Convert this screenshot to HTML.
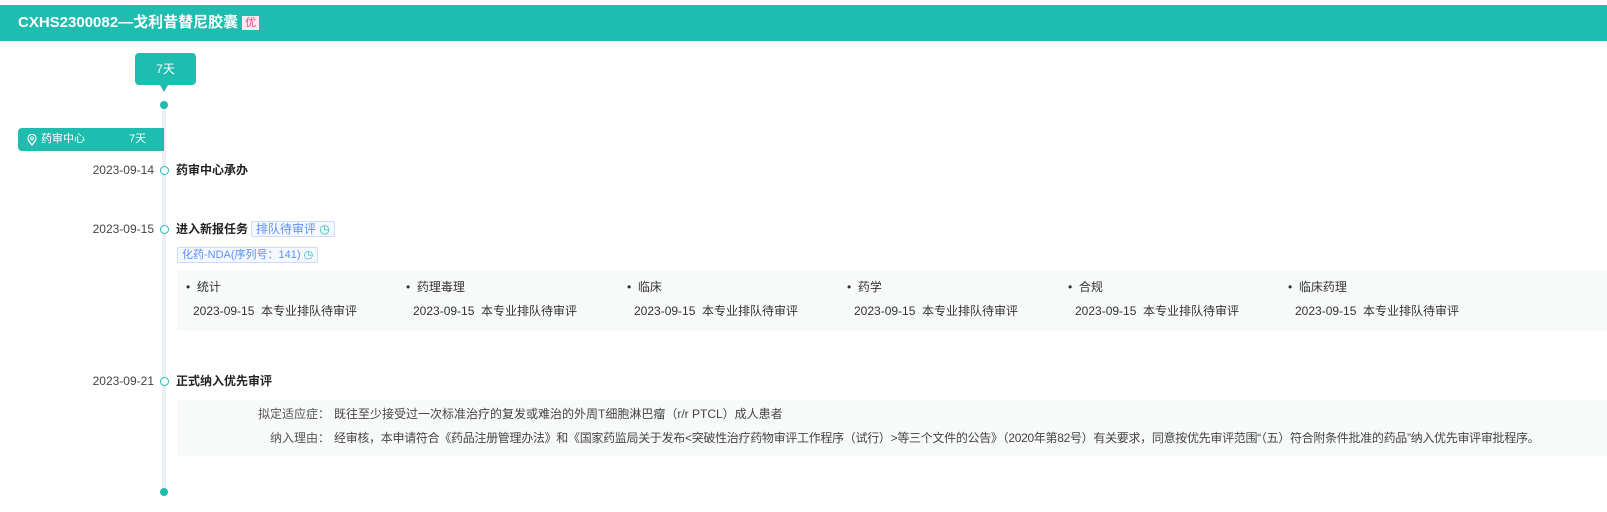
<!DOCTYPE html>
<html><head><meta charset="utf-8"><style>
*{margin:0;padding:0;box-sizing:border-box}
body{width:1607px;height:512px;background:#fff;font-family:"Liberation Sans","Noto Sans CJK SC",sans-serif;font-size:12px;color:#333;position:relative;overflow:hidden}
.abs{position:absolute;white-space:nowrap}
.hdr{left:0;top:5px;width:1607px;height:36px;background:#1fbcb0}
.hdr .t{position:absolute;left:18px;top:9px;color:#fff;font-weight:bold;font-size:15px;line-height:18px}
.you{display:inline-block;background:#fde8ef;color:#e8457a;font-size:11px;font-weight:normal;line-height:14px;padding:0 3px;margin-left:4px;vertical-align:1px}
.line{left:162px;top:105px;width:4px;height:387px;background:#e9eef5}
.dot{width:8px;height:8px;border-radius:50%;background:#1fbcb0}
.ring{width:9px;height:9px;border-radius:50%;border:1.5px solid #1fbcb0;background:#fff}
.bub{left:135px;top:53px;width:61px;height:32px;background:#1fbcb0;border-radius:4px;color:#fff;text-align:center;line-height:32px;font-size:12px}
.arr{left:160px;top:85px;width:0;height:0;border-left:4px solid transparent;border-right:4px solid transparent;border-top:7px solid #1fbcb0}
.gtag{left:18px;top:128px;width:146px;height:23px;background:#1fbcb0;border-radius:4px 0 0 4px;color:#fff;font-size:11px;line-height:23px}
.date{width:80px;text-align:right;color:#444;line-height:16px}
.ttl{font-weight:bold;color:#222;line-height:16px}
.tag{border:1px solid #c8dcfb;color:#5b8ff9;background:#f5f9ff;height:16px;line-height:14px;padding:0 4px;font-size:12px;border-radius:2px}
.box{background:#f8fafa}
.col{line-height:16px}
</style></head><body>
<div class="abs hdr"><div class="t">CXHS2300082—戈利昔替尼胶囊<span class="you">优</span></div></div>
<div class="abs bub">7天</div>
<div class="abs arr"></div>
<div class="abs line"></div>
<div class="abs dot" style="left:160px;top:101px"></div>
<div class="abs dot" style="left:160px;top:488px"></div>
<div class="abs gtag"><svg style="position:absolute;left:9px;top:6px" width="10" height="12" viewBox="0 0 10 12"><path d="M5 11C2.5 8 1 6.2 1 4.3A4 4 0 0 1 9 4.3C9 6.2 7.5 8 5 11Z" fill="none" stroke="#fff" stroke-width="1.2"/><circle cx="5" cy="4.4" r="1.4" fill="none" stroke="#fff" stroke-width="1.1"/></svg><span style="position:absolute;left:23px">药审中心</span><span style="position:absolute;left:111px">7天</span></div>

<div class="abs date" style="left:74px;top:162px">2023-09-14</div>
<div class="abs ring" style="left:159.5px;top:165.5px"></div>
<div class="abs ttl" style="left:176px;top:162px">药审中心承办</div>

<div class="abs date" style="left:74px;top:221px">2023-09-15</div>
<div class="abs ring" style="left:159.5px;top:224.5px"></div>
<div class="abs ttl" style="left:176px;top:221px">进入新报任务</div>
<div class="abs tag" style="left:251px;top:221px">排队待审评 <span style="color:#1fbcb0">◷</span></div>
<div class="abs tag" style="left:177px;top:247px;font-size:11px">化药-NDA(序列号：141) <span style="color:#1fbcb0">◷</span></div>
<div class="abs box" style="left:177px;top:271px;width:1430px;height:60px"></div>
<div class="abs col" style="left:186px;top:279px">•&nbsp; 统计<br><span style="display:block;margin-top:8px;margin-left:7px">2023-09-15&nbsp; 本专业排队待审评</span></div>
<div class="abs col" style="left:406px;top:279px">•&nbsp; 药理毒理<br><span style="display:block;margin-top:8px;margin-left:7px">2023-09-15&nbsp; 本专业排队待审评</span></div>
<div class="abs col" style="left:627px;top:279px">•&nbsp; 临床<br><span style="display:block;margin-top:8px;margin-left:7px">2023-09-15&nbsp; 本专业排队待审评</span></div>
<div class="abs col" style="left:847px;top:279px">•&nbsp; 药学<br><span style="display:block;margin-top:8px;margin-left:7px">2023-09-15&nbsp; 本专业排队待审评</span></div>
<div class="abs col" style="left:1068px;top:279px">•&nbsp; 合规<br><span style="display:block;margin-top:8px;margin-left:7px">2023-09-15&nbsp; 本专业排队待审评</span></div>
<div class="abs col" style="left:1288px;top:279px">•&nbsp; 临床药理<br><span style="display:block;margin-top:8px;margin-left:7px">2023-09-15&nbsp; 本专业排队待审评</span></div>

<div class="abs date" style="left:74px;top:373px">2023-09-21</div>
<div class="abs ring" style="left:159.5px;top:376.5px"></div>
<div class="abs ttl" style="left:176px;top:373px">正式纳入优先审评</div>
<div class="abs box" style="left:177px;top:400px;width:1430px;height:56px"></div>
<div class="abs" style="left:200px;top:406px;width:130px;text-align:right;color:#555;line-height:16px">拟定适应症：</div>
<div class="abs" style="left:334px;top:406px;color:#444;line-height:16px">既往至少接受过一次标准治疗的复发或难治的外周T细胞淋巴瘤（r/r PTCL）成人患者</div>
<div class="abs" style="left:200px;top:430px;width:130px;text-align:right;color:#555;line-height:16px">纳入理由：</div>
<div class="abs" style="left:334px;top:430px;color:#444;line-height:16px;letter-spacing:-0.3px">经审核，本申请符合《药品注册管理办法》和《国家药监局关于发布&lt;突破性治疗药物审评工作程序（试行）&gt;等三个文件的公告》（2020年第82号）有关要求，同意按优先审评范围“（五）符合附条件批准的药品”纳入优先审评审批程序。</div>
</body></html>
